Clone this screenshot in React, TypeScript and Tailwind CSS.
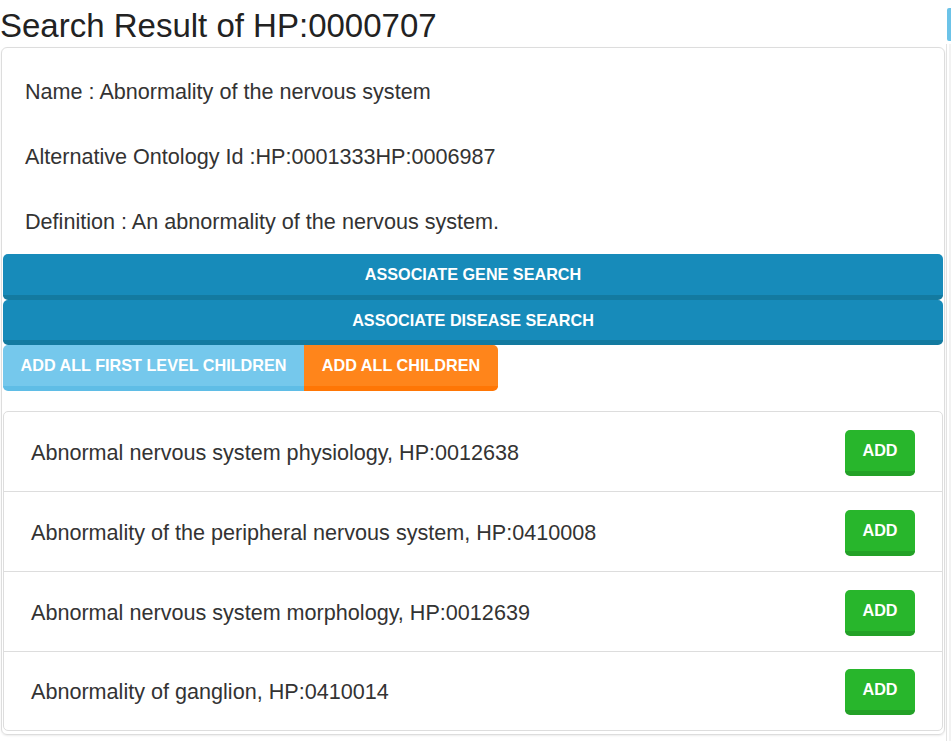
import React from "react";

const items = [
  "Abnormal nervous system physiology, HP:0012638",
  "Abnormality of the peripheral nervous system, HP:0410008",
  "Abnormal nervous system morphology, HP:0012639",
  "Abnormality of ganglion, HP:0410014",
];

export default function App() {
  return (
    <div
      className="relative w-[951px] h-[741px] overflow-hidden bg-white text-[#333333]"
      style={{ fontFamily: '"Liberation Sans", Arial, sans-serif' }}
    >
      <div className="absolute right-0 top-[8px] w-[4px] h-[33px] bg-[#6cc3e8] rounded-l-[2px]" />
      <div className="absolute left-[946px] top-[44px] w-[1px] h-[697px] bg-[#e2e2e2]" />
      <div className="absolute left-[949px] top-[44px] w-[2px] h-[697px] bg-[#f2f2f2]" />

      <h1 className="h-[47px] pt-[8px] text-[33px] leading-[36px] font-normal text-[#222]">
        Search Result of HP:0000707
      </h1>

      <div className="ml-[1px] w-[944px] h-[688px] border border-[#dddddd] rounded-[6px] shadow-[0_1px_2px_rgba(0,0,0,0.08)]">
        <div className="pl-[23px] pt-[29px] text-[21.6px] leading-[30px]">
          <p>Name : Abnormality of the nervous system</p>
          <p className="mt-[35px]">Alternative Ontology Id :HP:0001333HP:0006987</p>
          <p className="mt-[35px]">Definition : An abnormality of the nervous system.</p>
        </div>

        <div className="mx-[1px] mt-[17px] flex flex-col">
          <button className="h-[46px] w-full rounded-[5px] bg-[#178bba] border-b-[5px] border-[#137aa0] text-white font-bold text-[16.2px] flex items-center justify-center">
            ASSOCIATE GENE SEARCH
          </button>
          <button className="h-[45px] w-full rounded-[5px] bg-[#178bba] border-b-[5px] border-[#137aa0] text-white font-bold text-[16.2px] flex items-center justify-center">
            ASSOCIATE DISEASE SEARCH
          </button>
          <div className="flex">
            <button className="h-[46px] w-[301px] rounded-l-[5px] bg-[#75c8ec] border-b-[5px] border-[#5fbde6] text-white font-bold text-[16.2px] flex items-center justify-center">
              ADD ALL FIRST LEVEL CHILDREN
            </button>
            <button className="h-[46px] w-[194px] rounded-r-[5px] bg-[#ff851b] border-b-[5px] border-[#ff7605] text-white font-bold text-[16.2px] flex items-center justify-center">
              ADD ALL CHILDREN
            </button>
          </div>
        </div>

        <div className="mx-[1px] mt-[20px] border border-[#dddddd] rounded-[5px]">
          {items.map((t, i) => (
            <div
              key={i}
              className={`flex items-center justify-between pl-[27px] pr-[27px] pt-[2px] ${
                i < items.length - 1 ? "h-[80px] border-b border-[#dddddd]" : "h-[78px]"
              }`}
            >
              <span className="text-[21.6px] leading-[30px]">{t}</span>
              <button className="w-[70px] h-[46px] rounded-[5px] bg-[#28b62c] border-b-[5px] border-[#23a127] text-white font-bold text-[16.2px] flex items-center justify-center">
                ADD
              </button>
            </div>
          ))}
        </div>
      </div>
    </div>
  );
}
